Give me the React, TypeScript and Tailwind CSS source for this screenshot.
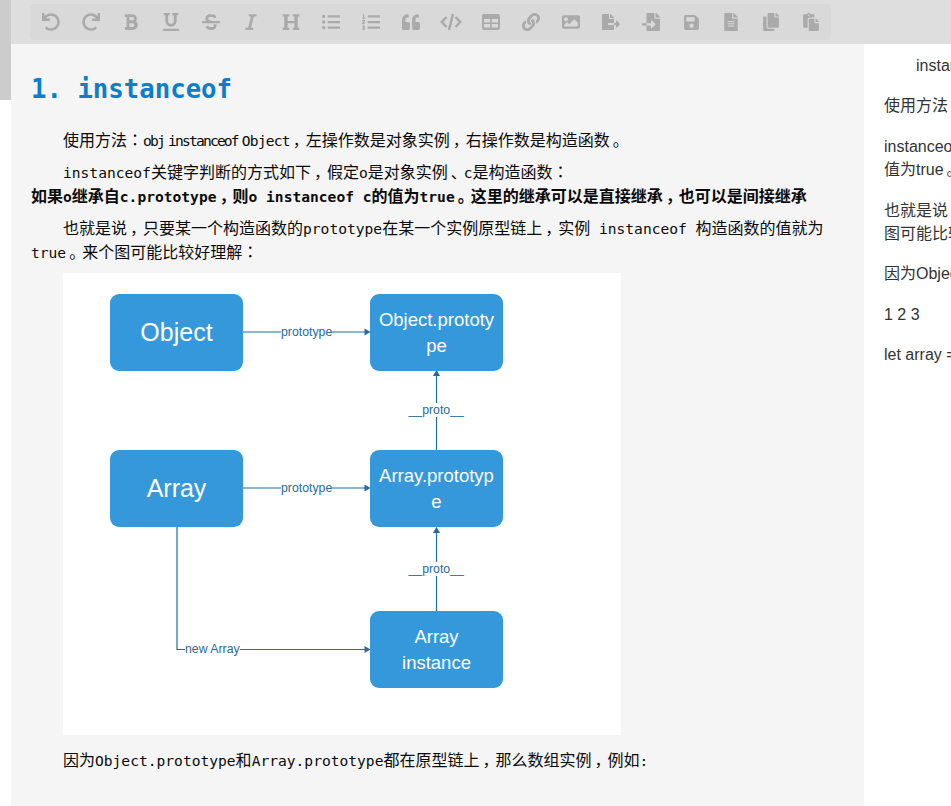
import React from "react";
import {
  FaUndo, FaRedo, FaBold, FaUnderline, FaStrikethrough, FaItalic, FaHeading, FaListUl, FaListOl,
  FaQuoteLeft, FaLink, FaImage, FaFileExport, FaFileImport, FaSave, FaFileAlt, FaCopy, FaPaste,
} from "react-icons/fa";

const iconClass = "h-[18px] w-auto";

function TableIcon() {
  return (
    <svg viewBox="0 0 18 16" className="h-[16px] w-[18px]" fill="currentColor">
      <path fillRule="evenodd" d="M2 0h14a2 2 0 0 1 2 2v12a2 2 0 0 1-2 2H2a2 2 0 0 1-2-2V2a2 2 0 0 1 2-2zM2 5v3.5h6.2V5zM9.8 5v3.5H16V5zM2 10v3.6h6.2V10zM9.8 10v3.6H16V10z" />
    </svg>
  );
}

function CodeIcon() {
  return (
    <svg viewBox="0 0 22 18" className="h-[18px] w-[22px]" fill="none" stroke="currentColor" strokeWidth="2.5">
      <path d="M6.5 4L1.8 9l4.7 5" />
      <path d="M15.5 4l4.7 5-4.7 5" />
      <path d="M13 1L9 17" />
    </svg>
  );
}

const tools = [
  <FaUndo className={iconClass} />, <FaRedo className={iconClass} />, <FaBold className={iconClass} />,
  <FaUnderline className={iconClass} />, <FaStrikethrough className={iconClass} />, <FaItalic className={iconClass} />,
  <FaHeading className={iconClass} />, <FaListUl className={iconClass} />, <FaListOl className={iconClass} />,
  <FaQuoteLeft className={iconClass} />, <CodeIcon />, <TableIcon />,
  <FaLink className={iconClass} />, <FaImage className={iconClass} />, <FaFileExport className={iconClass} />,
  <FaFileImport className={iconClass} />, <FaSave className="h-[17px] w-auto" />, <FaFileAlt className={iconClass} />,
  <FaCopy className={iconClass} />, <FaPaste className={iconClass} />,
];

function M({ children }: { children: React.ReactNode }) {
  return <span className="font-['DejaVu_Sans_Mono',monospace] text-[14.6px] leading-[0] whitespace-pre-wrap">{children}</span>;
}

function Colon() {
  return <span className="font-['Noto_Sans_CJK_TC',sans-serif] leading-[0]">：</span>;
}

function P({ children }: { children: React.ReactNode }) {
  return <span className="ml-[3px] mr-[-3px]">{children}</span>;
}

function Node({ className, big, children }: { className: string; big?: boolean; children: React.ReactNode }) {
  return (
    <div
      className={
        "absolute flex h-[77px] w-[133px] items-center justify-center rounded-[9px] bg-[#3598db] px-2 text-center text-white break-all " +
        (big ? "pb-[2px] text-[25px] leading-[30px] " : "text-[18.5px] leading-[26px] ") +
        className
      }
    >
      <span>{children}</span>
    </div>
  );
}

function Label({ className, children }: { className: string; children: React.ReactNode }) {
  return (
    <div className={"absolute bg-white text-[12.3px] leading-[14px] whitespace-nowrap text-[#2a6a9a] " + className}>
      {children}
    </div>
  );
}

function Diagram() {
  return (
    <div className="relative ml-8 mt-[10px] h-[462px] w-[558px] bg-white font-['Liberation_Sans',sans-serif]">
      <svg className="absolute inset-0 h-full w-full" viewBox="0 0 558 462" fill="none">
        <g stroke="#1f6fa5" strokeWidth="1.2">
          <path d="M180 59H303" />
          <path d="M180 215H303" />
          <path d="M373.5 177V102" />
          <path d="M373.5 338V259" />
          <path d="M114 254V376.5H303" />
        </g>
        <g fill="#2a6a9a">
          <path d="M307.5 59l-6-3.6v7.2z" />
          <path d="M307.5 215l-6-3.6v7.2z" />
          <path d="M307.5 376.5l-6-3.6v7.2z" />
          <path d="M373.5 97l-3.6 6h7.2z" />
          <path d="M373.5 254l-3.6 6h7.2z" />
        </g>
      </svg>
      <Node big className="left-[47px] top-[21px]">Object</Node>
      <Node className="left-[307px] top-[21px]">Object.prototype</Node>
      <Node big className="left-[47px] top-[177px]">Array</Node>
      <Node className="left-[307px] top-[177px]">Array.prototype</Node>
      <Node className="left-[307px] top-[338px]">Array<br />instance</Node>
      <Label className="left-[218px] top-[52px]">prototype</Label>
      <Label className="left-[218px] top-[208px]">prototype</Label>
      <Label className="left-[345.5px] top-[130px]">__proto__</Label>
      <Label className="left-[345.5px] top-[289px]">__proto__</Label>
      <Label className="left-[122px] top-[369px]">new Array</Label>
    </div>
  );
}

export default function App() {
  return (
    <div className="flex h-[806px] w-[951px] overflow-hidden bg-white">
      <aside className="w-[11px] shrink-0">
        <div className="h-[100px] bg-[#cccccc]" />
      </aside>
      <div className="flex min-w-0 flex-1 flex-col">
        <header className="h-[44px] shrink-0 bg-[#dedede] pl-[19px] pt-1">
          <div className="flex h-9 w-[801px] rounded bg-[#d9d9d9] pl-px text-[#aaaaaa]">
            {tools.map((t, i) => (
              <div key={i} className="flex h-full w-10 items-center justify-center">{t}</div>
            ))}
          </div>
        </header>
        <div className="flex min-h-0 flex-1">
          <main className="w-[853px] shrink-0 bg-[#f5f5f5] pl-5 pr-5 pt-[25px] font-['Noto_Sans_CJK_SC',sans-serif] text-[16px] leading-6 text-[#0a0a0a]">
            <h1 className="mb-[18px] font-['DejaVu_Sans_Mono',monospace] text-[25.7px] leading-10 font-bold text-[#0b7fcd]">
              1. instanceof
            </h1>
            <p className="mb-2 indent-8">
              使用方法<Colon />
              <span className="font-['DejaVu_Sans_Mono',monospace] text-[14.6px] leading-[0] tracking-[-1.8px] [word-spacing:-3px]">obj instanceof </span>
              <span className="font-['DejaVu_Sans_Mono',monospace] text-[14.6px] leading-[0] tracking-[-0.8px]">Object</span>
              <P>，</P>左操作数是对象实例<P>，</P>右操作数是构造函数<P>。</P>
            </p>
            <p className="mb-2 indent-8">
              <M>instanceof</M>关键字判断的方式如下<P>，</P>假定<M>o</M>是对象实例<P>、</P><M>c</M>是构造函数<Colon />
              <br />
              <strong className="font-bold">
                如果<M>o</M>继承自<M>c.prototype</M><P>，</P>则<M>o instanceof c</M>的值为<M>true</M><P>。</P>这里的继承可以是直接继承<P>，</P>也可以是间接继承
              </strong>
            </p>
            <p className="indent-8">
              也就是说<P>，</P>只要某一个构造函数的<M>prototype</M>在某一个实例原型链上<P>，</P>实例<M> instanceof </M>构造函数的值就为<M>true</M><P>。</P>来个图可能比较好理解<Colon />
            </p>
            <Diagram />
            <p className="mt-3 indent-8">
              因为<M>Object.prototype</M>和<M>Array.prototype</M>都在原型链上<P>，</P>那么数组实例<P>，</P>例如<M>:</M>
            </p>
          </main>
          <section className="w-[600px] shrink-0 whitespace-nowrap pl-5 pt-[10px] font-['Liberation_Sans','Noto_Sans_CJK_SC',sans-serif] text-[16px] leading-[23.4px] text-[#333]">
            <p className="mb-[17px] indent-8">instanceof</p>
            <p className="mb-[17px]">使用方法<Colon />obj instanceof Object，左操作数是对象实例，右操作数是构造函数。</p>
            <p className="mb-[17px]">instanceof关键字判断的方式如下，假定o是对象实例、c是构造函数：<br />值为true<P>。</P>这里的继承可以是直接继承，也可以是间接继承</p>
            <p className="mb-[17px]">也就是说<P>，</P>只要某一个构造函数的prototype在某一个实例原型链上，<br />图可能比较好理解：</p>
            <p className="mb-[17px]">因为Object.prototype和Array.prototype都在原型链上，那么数组实例，例如:</p>
            <p className="mb-[17px]">1 2 3</p>
            <p>let array = [1, 2, 3];</p>
          </section>
        </div>
      </div>
    </div>
  );
}
